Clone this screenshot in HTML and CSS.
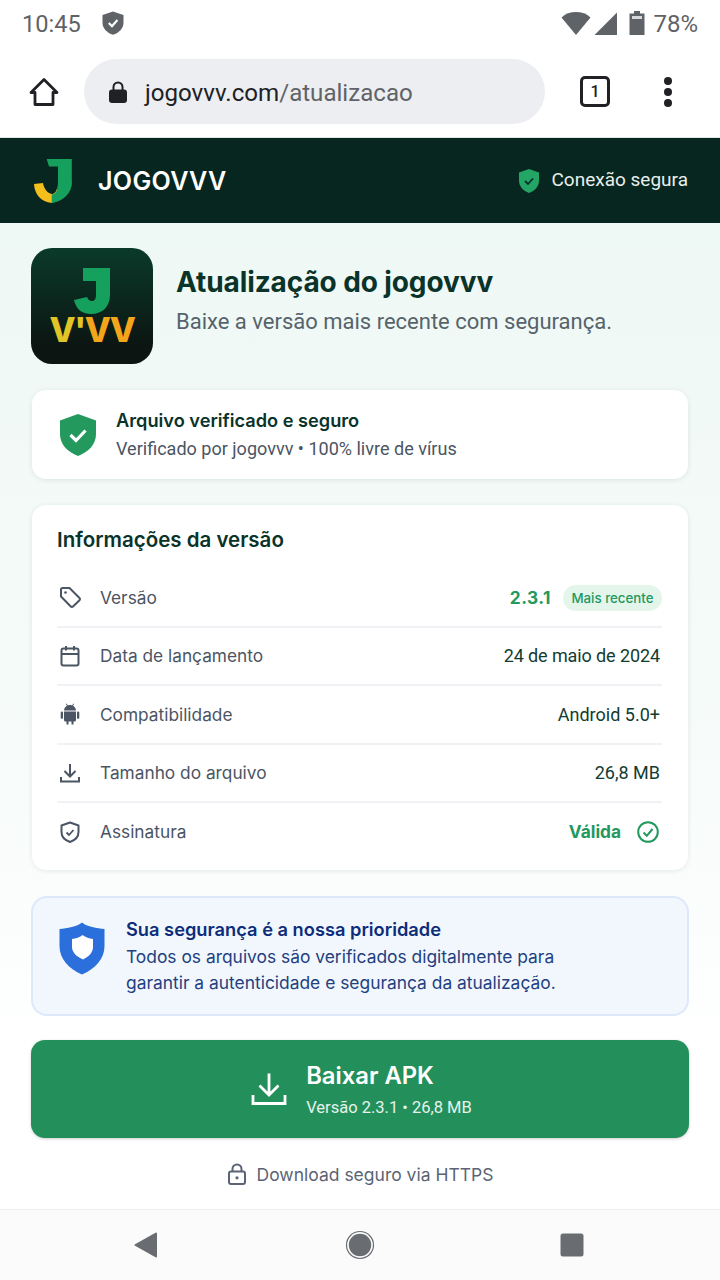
FILE: index.html
```html
<!DOCTYPE html>
<html lang="pt-BR">
<head>
<meta charset="utf-8">
<title>Atualização do jogovvv</title>
<link rel="stylesheet" href="styles.css">
</head>
<body>
<div class="screen">
  <div class="statusbar">
    <div class="status-group">
      <span class="time">10:45</span>
      <svg class="status-shield" width="22" height="24" viewBox="0 0 22 24"><path d="M11 0.500 L21.500 4 V11.500 C21.500 17.500 17 21.800 11 23.800 C5 21.800 0.500 17.500 0.500 11.500 V4 Z" fill="#5f6368"/><path d="M6.800 12 L10 15.200 L15.400 9" fill="none" stroke="#fff" stroke-width="2.200"/></svg>
    </div>
    <div class="status-group right">
      <svg class="wifi" width="30" height="24" viewBox="0 0 30 24"><path d="M0.500 6.500 C8 -0.800 22 -0.800 29.500 6.500 L15 24 Z" fill="#5f6368"/></svg>
      <svg class="signal" width="24" height="24" viewBox="0 0 24 24"><path d="M23 1.500 V24 H0.500 Z" fill="#5f6368"/></svg>
      <svg class="batt-icon" width="16" height="24" viewBox="0 0 16 24"><path d="M5 0 H11 V2.500 H15.500 V24 H0.500 V2.500 H5 Z" fill="#5f6368"/><rect x="3" y="5" width="10" height="3" fill="#fff" opacity=".75"/></svg>
      <span class="battery">78%</span>
    </div>
  </div>

  <div class="toolbar">
    <svg class="home-icon" width="32" height="32" viewBox="0 0 32 32"><path d="M16 3.500 L29 16.500 H25 V28.500 H7 V16.500 H3 Z" fill="none" stroke="#202124" stroke-width="2.800" stroke-linejoin="round"/></svg>
    <div class="omnibox">
      <svg width="20" height="24" viewBox="0 0 20 24"><path d="M5.500 10 V7 a4.500 4.500 0 0 1 9 0 V10" fill="none" stroke="#202124" stroke-width="2"/><rect x="1" y="9.500" width="18" height="13.500" rx="3" fill="#202124"/></svg>
      <span class="url"><span class="domain">jogovvv.com</span>/atualizacao</span>
    </div>
    <div class="tabs">1</div>
    <div class="menu"><i></i><i></i><i></i></div>
  </div>

  <header class="site-header">
    <div class="brand">
      <svg width="40" height="46" viewBox="0 0 40 46"><path d="M13.700 1 H38.800 V24 C38.800 35 30 43 18.700 45 C23 40 25 35.500 25 27 V8.500 H16 Z" fill="#16a05d"/><path d="M1 26 L10 25 C11 31 14.500 35 18.700 36 C21.500 36 23.500 34 25 27 V26 C24 36 22 41 18.700 45 C8 44 1.500 36 1 26 Z" fill="#f4bf1c"/><path d="M25 24 C25 33 22.500 36.500 18.700 36.500 L18.700 45 C30 43 38.800 35 38.800 24 Z" fill="#16a05d"/></svg>
      <span class="brand-name">JOGOVVV</span>
    </div>
    <div class="secure">
      <svg width="22" height="26" viewBox="0 0 22 26"><path d="M11 1 L21 4.500 V12.500 C21 18.500 16.800 22.800 11 25 C5.200 22.800 1 18.500 1 12.500 V4.500 Z" fill="#22a565"/><path d="M7 13 L10 16 L15 10.500" fill="none" stroke="#07302a" stroke-width="1.800"/></svg>
      <span class="secure-label">Conexão segura</span>
    </div>
  </header>

  <main class="content">
    <section class="hero">
      <div class="app-icon">
        <svg class="app-j" width="36" height="46" viewBox="0 0 36 46"><path d="M9 0 H36 V27 C36 38 29 46 17 46 C8 46 2 41 0 32 L13 29 C14 31.500 15.500 33 18 33 C20.500 33 22 31 22 27 V13 H9 Z" fill="#16a05d"/></svg>
        <span class="app-v"><span class="v-a">V'</span><span class="v-b">VV</span></span>
      </div>
      <div class="hero-text">
        <h1>Atualização do jogovvv</h1>
        <p>Baixe a versão mais recente com segurança.</p>
      </div>
    </section>

    <section class="card verified">
      <svg width="38" height="44" viewBox="0 0 38 44"><path d="M19 1 L37 7.500 V21 C37 31.500 29.500 39 19 43 C8.500 39 1 31.500 1 21 V7.500 Z" fill="#23995e"/><path d="M11.500 22 L17 27.500 L26.500 17.500" fill="none" stroke="#fff" stroke-width="3.200"/></svg>
      <div>
        <h2>Arquivo verificado e seguro</h2>
        <p>Verificado por jogovvv • 100% livre de vírus</p>
      </div>
    </section>

    <section class="card info">
      <h2>Informações da versão</h2>
      <div class="row">
        <svg class="row-icon" width="24" height="24" viewBox="0 0 24 24"><path d="M3 4.500 a1.500 1.500 0 0 1 1.500 -1.500 H11.500 L21.500 13 a1.500 1.500 0 0 1 0 2.200 L15 21.500 a1.500 1.500 0 0 1 -2.200 0 L3 11.500 Z" fill="none" stroke="#4b5563" stroke-width="2" stroke-linejoin="round"/><circle cx="7.500" cy="7.500" r="1.300" fill="#4b5563"/></svg>
        <span class="label">Versão</span>
        <span class="value green version">2.3.1</span>
        <span class="pill">Mais recente</span>
      </div>
      <div class="row">
        <svg class="row-icon" width="24" height="24" viewBox="0 0 24 24"><rect x="3.500" y="4.500" width="17" height="17" rx="2" fill="none" stroke="#4b5563" stroke-width="2"/><path d="M3.500 10 H20.500 M8 2 V6.500 M16 2 V6.500" stroke="#4b5563" stroke-width="2" fill="none"/></svg>
        <span class="label">Data de lançamento</span>
        <span class="value plain date">24 de maio de 2024</span>
      </div>
      <div class="row">
        <svg class="row-icon" width="24" height="24" viewBox="0 0 24 24"><path d="M6 9.500 H18 V18 a1.500 1.500 0 0 1 -1.500 1.500 H15.500 V22.500 H13.500 V19.500 H10.500 V22.500 H8.500 V19.500 H7.500 A1.500 1.500 0 0 1 6 18 Z M6 8.500 C6.200 6 7.500 4.500 9 3.800 L7.800 2 L8.500 1.500 L9.900 3.400 C11.200 3 12.800 3 14.100 3.400 L15.500 1.500 L16.200 2 L15 3.800 C16.500 4.500 17.800 6 18 8.500 Z" fill="#4b5563"/><rect x="2.700" y="9.500" width="2.300" height="7.500" rx="1.150" fill="#4b5563"/><rect x="19" y="9.500" width="2.300" height="7.500" rx="1.150" fill="#4b5563"/></svg>
        <span class="label">Compatibilidade</span>
        <span class="value plain">Android 5.0+</span>
      </div>
      <div class="row">
        <svg class="row-icon" width="24" height="24" viewBox="0 0 24 24"><path d="M12 3 V15 M6.500 10 L12 15.500 L17.500 10 M3 16 V20.500 H21 V16" fill="none" stroke="#4b5563" stroke-width="2"/></svg>
        <span class="label">Tamanho do arquivo</span>
        <span class="value plain">26,8 MB</span>
      </div>
      <div class="row">
        <svg class="row-icon" width="24" height="24" viewBox="0 0 24 24"><path d="M12 2.500 L20.500 5.500 V12 C20.500 17 17 20.300 12 22 C7 20.300 3.500 17 3.500 12 V5.500 Z" fill="none" stroke="#4b5563" stroke-width="2" stroke-linejoin="round"/><path d="M8.500 12.500 L11 15 L15.500 10" fill="none" stroke="#4b5563" stroke-width="1.800"/></svg>
        <span class="label">Assinatura</span>
        <span class="value green">Válida</span>
        <svg class="valid-check" width="24" height="24" viewBox="0 0 24 24"><circle cx="12" cy="12" r="9.800" fill="none" stroke="#23995e" stroke-width="2"/><path d="M7.500 12.500 L10.800 15.800 L16.500 9" fill="none" stroke="#23995e" stroke-width="2"/></svg>
      </div>
    </section>

    <section class="notice">
      <svg class="notice-icon" width="46" height="53" viewBox="0 0 46 53"><path d="M23 0.500 C28 4.500 38 6.500 45.500 7 V24 C45.500 37 36 47 23 52.500 C10 47 0.500 37 0.500 24 V7 C8 6.500 18 4.500 23 0.500 Z" fill="#2b6fdc"/><path d="M23.500 13 C26.500 15.500 30.500 16.500 34 17 V25 C34 30.500 30 34.500 24 37.500 C17.500 34.500 13 30.500 13 25 V17 C17 16.500 21 15.500 23.500 13 Z" fill="#fff"/></svg>
      <div>
        <h2>Sua segurança é a nossa prioridade</h2>
        <p>Todos os arquivos são verificados digitalmente para<br>garantir a autenticidade e segurança da atualização.</p>
      </div>
    </section>

    <button class="download">
      <svg width="36" height="36" viewBox="0 0 36 36"><path d="M18 2.500 V24 M8.500 14.500 L18 24 L27.500 14.500 M2 24 V32.500 H34 V24" fill="none" stroke="#fff" stroke-width="2.800"/></svg>
      <span class="download-text">
        <strong>Baixar APK</strong>
        <small>Versão 2.3.1 • 26,8 MB</small>
      </span>
    </button>

    <div class="https">
      <svg width="20" height="22" viewBox="0 0 20 22"><path d="M5.500 9 V6 a4.500 4.500 0 0 1 9 0 V9" fill="none" stroke="#5b6475" stroke-width="2"/><rect x="2" y="8.500" width="16" height="12.500" rx="2" fill="none" stroke="#5b6475" stroke-width="2"/><circle cx="10" cy="14.800" r="1.600" fill="#5b6475"/></svg>
      <span>Download seguro via HTTPS</span>
    </div>
  </main>

  <nav class="navbar">
    <svg width="26" height="28" viewBox="0 0 26 28"><path d="M23 2.500 V25.500 L2.500 14 Z" fill="#696c71" stroke="#696c71" stroke-width="2" stroke-linejoin="round"/></svg>
    <svg width="30" height="30" viewBox="0 0 30 30"><circle cx="15" cy="15" r="13.500" fill="none" stroke="#696c71" stroke-width="1.200"/><circle cx="15" cy="15" r="11.200" fill="#696c71"/></svg>
    <svg width="24" height="24" viewBox="0 0 24 24"><rect x="0.500" y="0.500" width="23" height="23" rx="2.500" fill="#696c71"/></svg>
  </nav>
</div>
</body>
</html>
```
FILE: styles.css
```css
* { box-sizing: border-box; }
html, body { margin: 0; padding: 0; }
body { background: #fff; font-family: Inter, "Noto Sans", sans-serif; }
.screen { width: 720px; height: 1280px; display: flex; flex-direction: column; overflow: hidden; background: #fff; }

.statusbar { height: 46px; padding: 0 22px 0 22px; display: flex; align-items: center; justify-content: space-between; font-family: Roboto, sans-serif; color: #5f6368; font-size: 24px; }
.status-group { display: flex; align-items: center; gap: 21px; }
.status-group.right { gap: 0; }
.time { font-size: 23.600px; padding-top: 2px; }
.signal { margin-left: 3px; }
.batt-icon { margin-left: 11px; }
.battery { margin-left: 8px; padding-top: 2px; }

.toolbar { height: 92px; display: flex; align-items: center; padding: 0 0 0 28px; border-bottom: 1px solid #dfe5e3; }
.home-icon { flex: none; }
.omnibox { width: 461px; height: 65px; margin-left: 24px; border-radius: 33px; background: #eceef2; display: flex; align-items: center; gap: 17px; padding-left: 24px; font-family: Roboto, sans-serif; font-size: 24.100px; color: #5f6368; }
.url { position: relative; top: 1px; }
.domain { color: #202124; }
.tabs { width: 30px; height: 31px; margin-left: 35px; border: 3px solid #202124; border-radius: 5px; display: flex; align-items: center; justify-content: center; font-family: Roboto, sans-serif; font-size: 16px; font-weight: 500; color: #202124; }
.menu { margin-left: 54px; display: flex; flex-direction: column; gap: 3px; }
.menu i { width: 8px; height: 8px; border-radius: 50%; background: #202124; display: block; }

.site-header { height: 85px; flex: none; background: #07261f; display: flex; align-items: center; justify-content: space-between; padding: 0 32px 0 33px; }
.brand { display: flex; align-items: center; gap: 25px; }
.brand-name { font-size: 25.100px; font-weight: 600; color: #fff; letter-spacing: .3px; }
.secure { display: flex; align-items: center; gap: 11px; color: #e8efec; font-size: 19px; font-family: Roboto, sans-serif; }
.secure-label { padding-bottom: 2px; }

.content { flex: 1; background: linear-gradient(180deg, #eef8f5 0%, #f6fbf9 50%, #ffffff 85%); padding: 25px 31px 0; display: flex; flex-direction: column; }

.hero { display: flex; align-items: center; gap: 23px; height: 116px; }
.app-icon { width: 122px; height: 116px; border-radius: 21px; background: linear-gradient(180deg, #0a3a2a 0%, #0c1512 85%); display: flex; flex-direction: column; align-items: center; justify-content: flex-start; padding-top: 20px; font-family: Inter, sans-serif; font-weight: 800; line-height: 1; }
.app-j { flex: none; }
.app-v { font-size: 34px; line-height: 32px; letter-spacing: -1.500px; }
.v-a { color: #e1c527; }
.v-b { color: #f3a61b; }
.hero-text { padding-bottom: 13px; }
.hero-text h1 { margin: 0 0 10px; font-size: 28px; font-weight: 700; color: #0a3329; line-height: 34px; letter-spacing: -.1px; }
.hero-text p { margin: 0; font-family: Roboto, sans-serif; font-size: 22px; color: #56636b; line-height: 26px; }

.card { background: #fff; border-radius: 14px; box-shadow: 0 1px 5px rgba(20, 60, 50, .1); }
.verified { height: 89px; margin: 26px 1px 0 1px; display: flex; align-items: center; gap: 19px; padding-left: 27px; }
.verified h2 { margin: 0 0 5px; font-size: 18.200px; font-weight: 600; color: #0a3329; line-height: 24px; }
.verified p { margin: 0; font-family: Roboto, sans-serif; font-size: 18.050px; color: #4b5563; line-height: 24px; }

.info { margin: 26px 1px 0 1px; height: 365px; padding: 21px 26px 0 25px; }
.info h2 { margin: 0 0 15px; font-size: 20.500px; font-weight: 600; color: #0a3329; line-height: 28px; }
.row { height: 58.500px; display: flex; align-items: center; border-bottom: 2px solid #f0f2f5; font-size: 17.300px; }
.row:last-child { border-bottom: 0; height: 57px; }
.row-icon { flex: none; margin-left: 1px; margin-right: 18px; }
.label { color: #4b5563; margin-right: auto; }
.value { color: #123c32; }
.value.plain { font-family: Roboto, sans-serif; font-size: 18px; margin-right: 2px; }
.value.date { letter-spacing: -.1px; }
.value.green { color: #23995e; font-weight: 700; }
.value.version { letter-spacing: .5px; }
.pill { margin: 1px 0 0 12px; width: 99px; height: 26px; border-radius: 13px; background: #e4f6ec; color: #23995e; font-size: 13.300px; font-weight: 500; display: flex; align-items: center; justify-content: center; }
.valid-check { margin-left: 15px; margin-right: 2px; }

.notice { margin-top: 26px; height: 120px; border-radius: 16px; background: #f2f7fe; border: 2px solid #dde9fb; display: flex; align-items: center; gap: 21px; padding-left: 26px; }
.notice-icon { flex: none; margin-bottom: 16px; }
.notice h2 { margin: 0 0 2px; font-size: 18.250px; font-weight: 600; color: #0d2d7a; line-height: 25px; }
.notice p { margin: 0; font-size: 17.400px; color: #23417f; line-height: 26px; }

.download { margin-top: 24px; height: 98px; border: 0; border-radius: 14px; background: #23905c; color: #fff; display: flex; align-items: center; justify-content: center; gap: 19px; font-family: Inter, sans-serif; box-shadow: 0 1px 3px rgba(0, 0, 0, .2); padding: 0 0 0 3px; }
.download-text { display: flex; flex-direction: column; align-items: flex-start; gap: 7px; }
.download-text strong { font-size: 23.800px; font-weight: 600; line-height: 30px; }
.download-text small { font-family: Roboto, sans-serif; font-size: 16.500px; font-weight: 400; line-height: 20px; color: #e6f3ec; }

.https { margin-top: 25px; display: flex; align-items: center; justify-content: center; gap: 10px; color: #5b6475; font-size: 17.500px; }

.navbar { height: 71px; flex: none; background: #fbfbfb; border-top: 1px solid #eeeeee; display: flex; align-items: center; justify-content: space-between; padding: 0 136px 0 133px; }
```
